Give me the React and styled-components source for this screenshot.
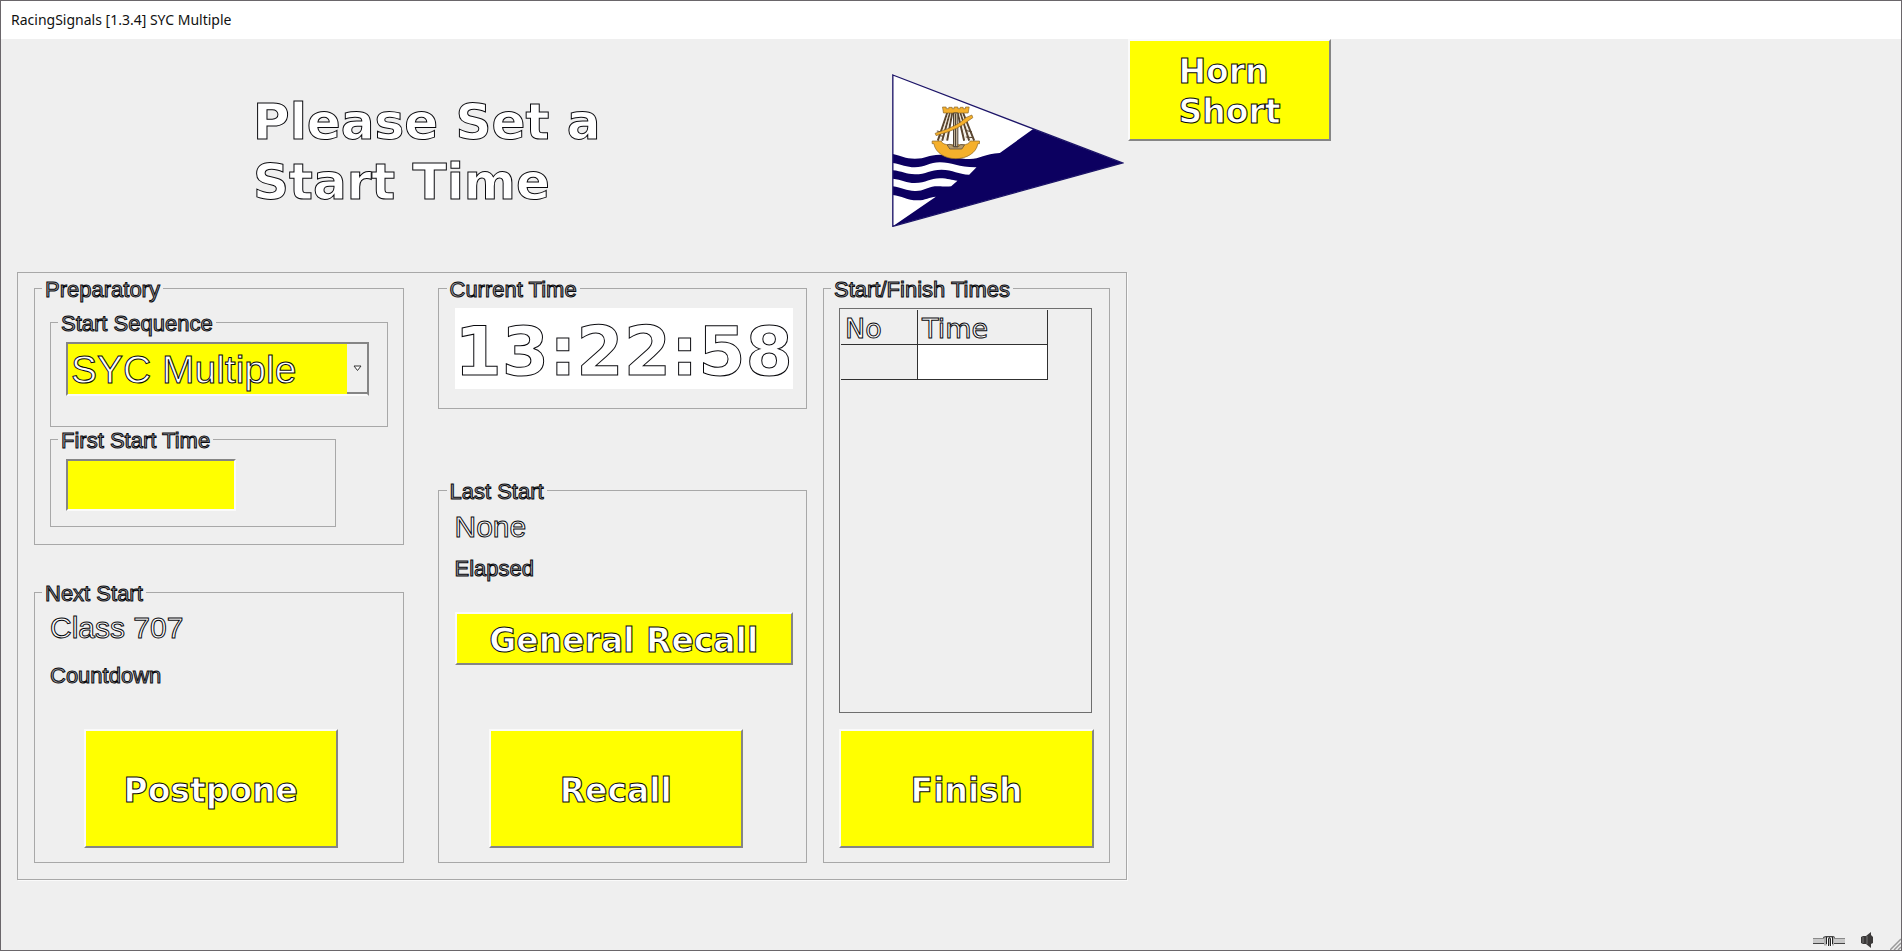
import React from "react";
import styled, { createGlobalStyle } from "styled-components";

const GlobalStyle = createGlobalStyle`
  *, *::before, *::after { box-sizing: border-box; }
  body { margin: 0; background: #f0f0f0; }
`;

const sans = `"Liberation Sans", Arial, sans-serif`;
const wide = `"DejaVu Sans", Verdana, sans-serif`;
const yellow = "#ffff00";
const smallInk = "#a4a4a8";

const Window = styled.div`
  min-height: 100vh;
  display: flex;
  flex-direction: column;
  border: 1px solid #6a666a;
  background: #efefef;
  color: #fff;
  font: 22px/24px ${sans};
  -webkit-text-stroke: 1px #08080c;
`;

const TitleBar = styled.header`
  height: 38px;
  padding: 0 10px;
  display: flex;
  align-items: center;
  background: #fff;
  color: #111;
  font: 14px/20px "Noto Sans", "Segoe UI", sans-serif;
  -webkit-text-stroke: 0;
`;

const Banner = styled.section`
  display: flex;
  align-items: flex-start;
  padding-left: 252px;
`;

const Message = styled.h1`
  flex: 0 1 639px;
  min-height: 180px;
  margin: 53px 0 0;
  font: bold 50px/60px ${wide};
`;

const Burgee = styled.svg`
  flex: none;
  width: 232px;
  height: 153px;
  margin: 35px 4px 0 0;
`;

const ActionButton = styled.button`
  width: ${(p) => p.$width};
  height: ${(p) => p.$height || 119}px;
  flex: none;
  display: flex;
  align-items: center;
  justify-content: center;
  padding: 4px 0 0;
  border: 2px solid;
  border-color: #fafafa #858585 #858585 #fafafa;
  border-radius: 0;
  background: ${yellow};
  color: inherit;
  font: bold 33px/40px ${wide};
  text-align: left;
  -webkit-text-stroke: inherit;
  cursor: pointer;
`;

const Panel = styled.main`
  display: flex;
  gap: 16px;
  max-width: 1110px;
  margin: 0 16px;
  padding: 3px 16px 16px;
  border: 1px solid #a8a8a8;
  box-shadow: 1px 1px 0 #fafafa;
`;

const Column = styled.div`
  flex: ${(p) => p.$share} 1 0;
  min-width: 0;
  display: flex;
  flex-direction: column;
  justify-content: space-between;
`;

const Starts = styled.div`
  flex: 773 1 0;
  display: flex;
  gap: 34px;
`;

const Group = styled.fieldset`
  width: ${(p) => p.$width || "auto"};
  min-width: 0;
  margin: 0;
  padding: ${(p) => p.$pad};
  border: 1px solid #a8a8a8;
`;

const Legend = styled.legend`
  height: 24px;
  margin-left: -8px;
  padding: 0 3px;
  color: ${smallInk};
  line-height: 28px;
`;

const Combo = styled.div`
  display: flex;
  width: 303px;
  height: 54px;
  border: 2px solid;
  border-color: #858585 #858585 #fafafa #858585;
`;

const Select = styled.select`
  appearance: none;
  flex: 1;
  min-width: 0;
  padding: 2px 3px 0;
  border: 0;
  border-radius: 0;
  background: ${yellow};
  color: inherit;
  font: 39px/46px ${sans};
  -webkit-text-stroke: inherit;
`;

const ComboArrow = styled.span`
  width: 20px;
  display: flex;
  align-items: center;
  justify-content: center;
  border-bottom: 2px solid #858585;
`;

const TimeInput = styled.input`
  width: 170px;
  height: 52px;
  padding: 0 3px;
  border: 2px solid;
  border-color: #858585 #fafafa #fafafa #858585;
  background: ${yellow};
  color: inherit;
  font: 39px/46px ${sans};
  -webkit-text-stroke: inherit;
`;

const Clock = styled.time`
  display: block;
  height: 81px;
  background: #fff;
  font: bold 68px/88px ${wide};
  white-space: nowrap;
`;

const ClassName = styled.p`
  margin: 0;
  font-size: 30px;
  line-height: 34px;
`;

const Caption = styled.p`
  margin: ${(p) => p.$gap}px 0 0;
  color: ${smallInk};
  line-height: 26px;
`;

const ButtonRow = styled.div`
  display: flex;
  justify-content: center;
  margin-top: ${(p) => p.$gap}px;
  padding-right: ${(p) => p.$shift || 0}px;
`;

const TimesFrame = styled.div`
  height: 405px;
  margin-right: 2px;
  padding: 1px 0 0 1px;
  border: 1px solid #6e6e6e;
`;

const TimesTable = styled.table`
  width: 207px;
  table-layout: fixed;
  border-collapse: separate;
  border-spacing: 0;
  font: 27px/30px ${wide};

  th, td {
    height: 35px;
    padding: 4px 4px 0;
    border: solid #303030;
    border-width: 0 1px 1px 0;
    text-align: left;
    font-weight: normal;
  }
  th:first-child { width: 77px; }
  td:last-child { background: #fff; }
`;

const StatusBar = styled.footer`
  display: flex;
  align-items: flex-end;
  justify-content: flex-end;
  margin-top: auto;
  height: 20px;

  svg { display: block; flex: none; }
`;

const PlugIcon = styled.svg`
  margin: 0 16px 2px 0;
`;

const SpeakerIcon = styled.svg`
  margin: 0 17px 2px 0;
`;

function ClubBurgee() {
  return (
    <Burgee viewBox="97 133 695 459" role="img" aria-label="Club burgee">
      <path d="M99 136 788 400 99 590Z" fill="#fff" />
      <path
        d="M99 373C125 378 135 387 165 387C198 387 205 375 240 375C275 375 295 388 330 388C360 388 375 372 420 370L520 298 788 400 99 590Z"
        fill="#0c0060"
      />
      <path
        d="M99 400C125 404 140 413 165 413C195 413 210 398 240 398C275 398 300 414 350 413L328 435C295 434 280 420 245 420C210 420 200 434 165 434C140 434 125 424 99 422Z"
        fill="#fff"
      />
      <path
        d="M99 447C125 450 140 460 165 460C200 460 210 446 240 446C265 446 275 452 293 453L274 470C250 472 245 468 225 470C200 474 190 485 165 484C140 484 125 473 99 470Z"
        fill="#fff"
      />
      <path d="M99 496C125 499 145 513 175 512C195 512 210 502 228 501L99 590Z" fill="#fff" />
      <path d="M99 136 788 400 99 590Z" fill="none" stroke="#1c1468" strokeWidth="4" />
      <g stroke="#5a4630" fill="none">
        <path d="M262 250 234 333M270 250 247 333M277 250 262 333M294 250 313 333M302 250 328 333M310 250 343 333" strokeWidth="6" />
        <path d="M266 252 240 333M298 252 320 333M306 252 335 333M273 252 255 333" stroke="#e8dcc4" strokeWidth="2" />
        <path d="M231 304 252 308M238 318 252 320M320 303 336 306M318 322 340 324" strokeWidth="3" />
      </g>
      <path
        d="M248 232H259V237H267V233H277V237H283V232H294V237H301V233H310V237H317V232H328L325 250H251Z"
        fill="#f5b02c"
        stroke="#8a6324"
        strokeWidth="2"
      />
      <path
        d="M217 334H244C247 342 256 345 266 345H310C320 345 328 342 331 334H359V342H354C350 370 320 387 288 387C256 387 227 370 222 342H217Z"
        fill="#f5b02c"
        stroke="#8a6324"
        strokeWidth="2"
      />
      <path d="M281 250H294V351H281Z" fill="#d7c7aa" stroke="#4e4236" strokeWidth="3" />
      <path d="M287 252V350" stroke="#4e4236" strokeWidth="4" />
      <path d="M262 346Q275 340 281 352H294Q302 340 314 346L306 358H270Z" fill="#b59a6c" stroke="#4e4236" strokeWidth="2" />
      <path
        d="M226 311 240 306Q295 288 318 264L336 256 339 264 330 270Q295 300 240 314L229 318Z"
        fill="#f5b02c"
        stroke="#8a6324"
        strokeWidth="2"
      />
    </Burgee>
  );
}

export default function App() {
  return (
    <>
      <GlobalStyle />
      <Window>
        <TitleBar>RacingSignals [1.3.4] SYC Multiple</TitleBar>

        <Banner>
          <Message>
            Please Set a<br />
            Start Time
          </Message>
          <ClubBurgee />
          <ActionButton $width="203px" $height={102}>
            <span>
              Horn
              <br />
              Short
            </span>
          </ActionButton>
        </Banner>

        <Panel>
          <Starts>
            <Column $share={1}>
              <Group $pad="10px 15px 17px">
                <Legend>Preparatory</Legend>
                <Group $pad="8px 15px 30px">
                  <Legend>
                    <label htmlFor="sequence">Start Sequence</label>
                  </Legend>
                  <Combo>
                    <Select id="sequence" defaultValue="SYC Multiple">
                      <option>SYC Multiple</option>
                    </Select>
                    <ComboArrow aria-hidden="true">
                      <svg width="9" height="7" viewBox="0 0 9 7">
                        <path d="M1 1H8L4.500 5.500Z" fill="#fff" stroke="#333" />
                      </svg>
                    </ComboArrow>
                  </Combo>
                </Group>
                <Group $pad="8px 15px 15px" $width="286px">
                  <Legend>
                    <label htmlFor="first-start">First Start Time</label>
                  </Legend>
                  <TimeInput id="first-start" type="text" />
                </Group>
              </Group>

              <Group $pad="7px 15px 14px">
                <Legend>Next Start</Legend>
                <ClassName>Class 707</ClassName>
                <Caption $gap={18}>Countdown</Caption>
                <ButtonRow $gap={40} $shift={16}>
                  <ActionButton $width="254px">Postpone</ActionButton>
                </ButtonRow>
              </Group>
            </Column>

            <Column $share={1}>
              <Group $pad="8px 13px 19px 16px">
                <Legend>Current Time</Legend>
                <Clock>13:22:58</Clock>
              </Group>

              <Group $pad="8px 13px 14px 16px">
                <Legend>Last Start</Legend>
                <ClassName>None</ClassName>
                <Caption $gap={12}>Elapsed</Caption>
                <ButtonRow $gap={30}>
                  <ActionButton $width="100%" $height={53}>
                    General Recall
                  </ActionButton>
                </ButtonRow>
                <ButtonRow $gap={64} $shift={16}>
                  <ActionButton $width="254px">Recall</ActionButton>
                </ButtonRow>
              </Group>
            </Column>
          </Starts>

          <Column $share={287}>
            <Group $pad="8px 15px 14px">
              <Legend>Start/Finish Times</Legend>
              <TimesFrame>
                <TimesTable>
                  <thead>
                    <tr>
                      <th scope="col">No</th>
                      <th scope="col">Time</th>
                    </tr>
                  </thead>
                  <tbody>
                    <tr>
                      <td />
                      <td />
                    </tr>
                  </tbody>
                </TimesTable>
              </TimesFrame>
              <ButtonRow $gap={16}>
                <ActionButton $width="100%">Finish</ActionButton>
              </ButtonRow>
            </Group>
          </Column>
        </Panel>

        <StatusBar>
          <PlugIcon width="32" height="14" viewBox="0 0 32 14" aria-label="Connected" role="img">
            <path d="M0 4H11V10H0ZM21 4H32V10H21Z" fill="#c8c8c8" />
            <path d="M0 4.500H11M21 4.500H32" stroke="#8a8a8a" />
            <path d="M0 9.500H11M21 9.500H32" stroke="#444" />
            <path d="M11 2.500H21V11.500H11Z" fill="#b0b0b0" />
            <path d="M10 3.500 13 2.500H20L22 3.500" fill="none" stroke="#444" />
            <path d="M13.500 10V3M15.500 12V5L16.500 3.500 17.500 5V12M19.500 10V3" fill="none" stroke="#222" />
            <path d="M14.500 4V12M18.500 4V12" stroke="#fff" />
          </PlugIcon>
          <SpeakerIcon width="12" height="16" viewBox="0 0 12 16" aria-label="Sound on" role="img">
            <path d="M0 5 2 4H5L10 0V3L12 5V11L10 12V16L5 12H2L0 11Z" fill="#3a3838" />
            <path d="M2 5V11M6 4V12" stroke="#777" />
          </SpeakerIcon>
          <svg width="11" height="12" viewBox="0 0 11 12" aria-hidden="true">
            <path d="M0 12 11 1M4 12 11 5M8 12 11 9" stroke="#999" strokeWidth="1.500" />
          </svg>
        </StatusBar>
      </Window>
    </>
  );
}
